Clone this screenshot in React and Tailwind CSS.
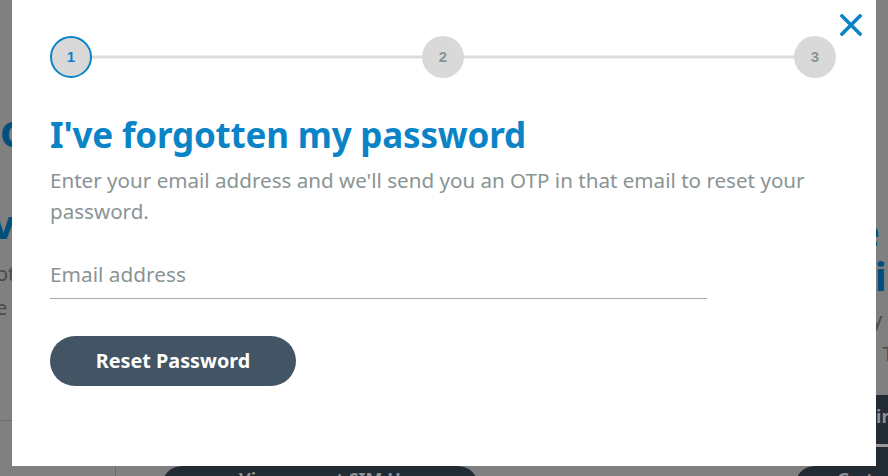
import React from "react";

function Step({ n, active }) {
  return (
    <div
      className={
        "relative z-10 flex h-[42px] w-[42px] shrink-0 items-center justify-center rounded-full bg-[#d9d9d9] text-[15px] font-bold " +
        (active ? "border-2 border-[#0a84c6] text-[#0a84c6]" : "text-[#8a9494]")
      }
      style={{ fontFamily: "'Liberation Sans', Arial, sans-serif" }}
    >
      {n}
    </div>
  );
}

function Background() {
  return (
    <div className="absolute inset-0 flex justify-between overflow-hidden whitespace-nowrap">
      {/* left edge of page behind */}
      <div className="flex w-[12px] flex-col overflow-visible pt-[108px] leading-none">
        <div className="text-[44px] font-bold text-[#00507d]">o</div>
        <div className="mt-[52px] -ml-[8px] text-[40px] font-bold text-[#00507d]">v</div>
        <div className="mt-[20px] -ml-[4px] text-[20px] text-[#4a4a4a]">ot</div>
        <div className="mt-[14px] -ml-[4px] text-[20px] text-[#4a4a4a]">e</div>
        <div className="mt-[102px] h-px w-[12px] bg-[#6a6a6a]" />
      </div>
      {/* right edge */}
      <div className="flex w-[12px] flex-col overflow-visible pt-[212px] leading-none">
        <div className="-ml-[20px] text-[40px] font-bold text-[#00507d]">e</div>
        <div className="mt-[4px] -ml-[24px] text-[40px] font-bold text-[#00507d]">vi</div>
        <div className="mt-[14px] -ml-[4px] text-[20px] text-[#4a4a4a]">y</div>
        <div className="mt-[14px] -ml-[4px] text-[20px] text-[#4a4a4a]">; T</div>
        <div className="mt-[31px] h-[50px] w-[12px] bg-[#222a33] pt-[12px] text-[18px] font-bold text-[#8a9096]">in</div>
        <div className="h-[3px] w-[12px] bg-[#9a9a9a]" />
        <div className="h-[30px] w-[12px] bg-[#222a33]" />
      </div>
      {/* bottom strip */}
      <div className="absolute bottom-0 left-0 flex h-[10px] w-full items-start">
        <div className="ml-[115px] h-[10px] w-px shrink-0 bg-[#6a6a6a]" />
        <div className="ml-[46px] flex h-[40px] w-[316px] shrink-0 justify-center rounded-t-[20px] bg-[#222a33] pt-[2px] text-[18px] font-bold leading-[22px] text-[#8a9096]">
          Vi<span className="ml-[80px]">t SIM U</span>
        </div>
        <div className="ml-[317px] h-[40px] w-[140px] shrink-0 rounded-tl-[20px] bg-[#222a33] pl-[42px] pt-[2px] text-[18px] font-bold leading-[22px] text-[#8a9096]">
          Go to
        </div>
      </div>
    </div>
  );
}

export default function App() {
  return (
    <div
      className="relative h-[476px] w-[888px] overflow-hidden bg-[#808080]"
      style={{ fontFamily: "'Noto Sans', 'Open Sans', sans-serif" }}
    >
      <Background />

      {/* modal */}
      <div className="absolute left-[12px] top-0 h-[466px] w-[864px] bg-white pl-[38px] pr-[40px] pt-[36px]">
        <button className="absolute right-[13px] top-[13px] flex h-[24px] w-[24px] items-center justify-center">
          <svg width="22" height="22" viewBox="0 0 22 22">
            <path d="M2 2 L20 20 M20 2 L2 20" stroke="#0a84c6" strokeWidth="3.6" strokeLinecap="square" />
          </svg>
        </button>

        <div className="relative flex w-[786px] items-center justify-between">
          <div className="absolute left-[20px] right-[20px] top-1/2 h-[3px] -translate-y-1/2 bg-[#dcdcdc]" />
          <Step n="1" active />
          <Step n="2" />
          <Step n="3" />
        </div>

        <h1 className="mt-[33px] text-[35px] font-bold leading-[48px] tracking-[-0.2px] text-[#0a84c6]">
          I've forgotten my password
        </h1>
        <p className="mt-[6px] text-[20.6px] leading-[31px] text-[#8a9494]">
          Enter your email address and we'll send you an OTP in that email to reset your password.
        </p>

        <div className="mt-[33px] w-[657px] border-b border-[#a3aaaa] pb-[10px]">
          <div className="text-[20.8px] leading-[28px] text-[#8a9494]">Email address</div>
        </div>

        <button className="mt-[37px] flex h-[50px] w-[246px] items-center justify-center rounded-full bg-[#435464] text-[19.8px] font-bold text-white">
          Reset Password
        </button>
      </div>
    </div>
  );
}
